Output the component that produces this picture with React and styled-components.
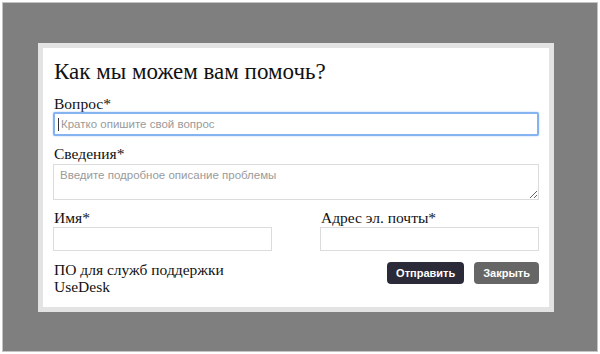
import styled, { createGlobalStyle } from "styled-components";

const Global = createGlobalStyle`
    html, body {
        margin: 0;
        padding: 0;
        background: #ffffff;
    }
    * {
        box-sizing: border-box;
    }
`
const Frame = styled.div`
    width: 600px;
    height: 354px;
    padding: 2px;
    background: #ffffff;
`
const Backdrop = styled.div`
    width: 100%;
    height: 100%;
    border: 1px solid #c4c4c4;
    background-color: #7f7f7f;
    padding: 40px 0 0 35px;
`
const Modal = styled.div`
    width: 516px;
    height: 269px;
    border: 5px solid #e3e3e3;
    background: #ffffff;
    padding: 11px 10px 0 10px;
    font-family: "Liberation Serif", "Times New Roman", serif;
    color: #111111;
`
const Title = styled.h2`
    margin: 0 0 11px 1px;
    font-family: "Liberation Serif", "Times New Roman", serif;
    font-size: 23px;
    line-height: 26px;
    font-weight: normal;
`
const Label = styled.label`
    display: block;
    font-family: "Liberation Serif", "Times New Roman", serif;
    font-size: 15.5px;
    line-height: 16px;
    margin: 0 0 ${p => p.$gap || 0}px 1px;
`
const Field = styled.div`
    position: relative;
    margin-bottom: ${p => p.$mb || 0}px;
`
const Input = styled.input`
    display: block;
    width: 100%;
    height: 24px;
    margin: 0;
    padding: 0 6px;
    border: ${p => (p.$focused ? "2px solid #84b3ef" : "1px solid #dcdcdc")};
    box-shadow: ${p => (p.$focused ? "0 0 2px #a9cbf5" : "none")};
    border-radius: ${p => (p.$focused ? "2px" : "0")};
    outline: none;
    background: #ffffff;
    font-family: "Liberation Sans", Arial, sans-serif;
    font-size: 11.5px;
    color: #333333;
    &::placeholder {
        color: #9a9a9a;
    }
`
const Caret = styled.span`
    position: absolute;
    left: 5px;
    top: 6px;
    width: 1px;
    height: 13px;
    background: #333333;
`
const TextArea = styled.textarea`
    display: block;
    width: 100%;
    height: 36px;
    margin: 0;
    padding: 4px 6px;
    border: 1px solid #dcdcdc;
    outline: none;
    resize: vertical;
    font-family: "Liberation Sans", Arial, sans-serif;
    font-size: 11.5px;
    color: #333333;
    &::placeholder {
        color: #9a9a9a;
    }
`
const Columns = styled.div`
    display: grid;
    grid-template-columns: 219px 219px;
    justify-content: space-between;
    margin-bottom: 11px;
`
const Footer = styled.div`
    display: flex;
    justify-content: space-between;
    align-items: flex-start;
`
const Credit = styled.div`
    font-family: "Liberation Serif", "Times New Roman", serif;
    font-size: 15.5px;
    line-height: 17px;
    margin-top: -1px;
    padding-left: 1px;
`
const Buttons = styled.div`
    display: flex;
    gap: 10px;
`
const Button = styled.button`
    height: 22px;
    padding: 0 9px;
    border: none;
    border-radius: 4px;
    background: ${p => (p.$dark ? "#2b2a39" : "#666666")};
    color: #ffffff;
    font-family: "Liberation Sans", Arial, sans-serif;
    font-size: 11px;
    font-weight: bold;
    cursor: pointer;
`

export default function App() {
    return (
        <>
            <Global />
            <Frame>
                <Backdrop>
                    <Modal>
                        <Title>Как мы можем вам помочь?</Title>
                        <Label>Вопрос*</Label>
                        <Field $mb={10}>
                            <Input $focused placeholder="Кратко опишите свой вопрос" />
                            <Caret />
                        </Field>
                        <Label $gap={2}>Сведения*</Label>
                        <Field $mb={10}>
                            <TextArea placeholder="Введите подробное описание проблемы" />
                        </Field>
                        <Columns>
                            <div>
                                <Label $gap={1}>Имя*</Label>
                                <Input />
                            </div>
                            <div>
                                <Label $gap={1}>Адрес эл. почты*</Label>
                                <Input />
                            </div>
                        </Columns>
                        <Footer>
                            <Credit>
                                ПО для служб поддержки
                                <br />
                                UseDesk
                            </Credit>
                            <Buttons>
                                <Button $dark>Отправить</Button>
                                <Button>Закрыть</Button>
                            </Buttons>
                        </Footer>
                    </Modal>
                </Backdrop>
            </Frame>
        </>
    )
}
